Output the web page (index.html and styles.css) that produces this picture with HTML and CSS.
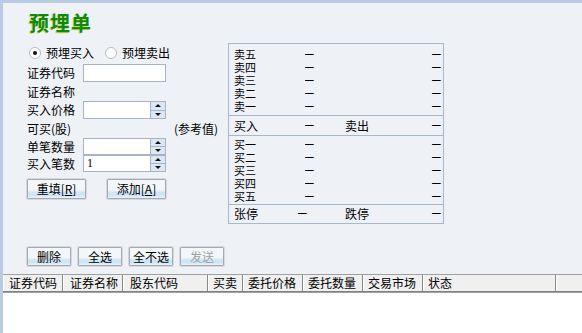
FILE: index.html
```html
<!DOCTYPE html>
<html>
<head>
<meta charset="utf-8">
<link rel="stylesheet" href="styles.css">
</head>
<body>
<div class="app">
  <div class="title">预埋单</div>
  <div class="main">
    <div class="form">
      <div class="radios">
        <span class="radio checked"></span><span class="rlabel">预埋买入</span>
        <span class="radio"></span><span class="rlabel">预埋卖出</span>
      </div>
      <div class="row r18"><span class="lbl">证券代码</span><span class="input"></span></div>
      <div class="row r19"><span class="lbl">证券名称</span></div>
      <div class="row r18"><span class="lbl">买入价格</span><span class="input spin"><span class="val"></span><span class="spinner"><span class="up"></span><span class="down"></span></span></span></div>
      <div class="row r19 between"><span class="lbl">可买(股)</span><span class="ref">(参考值)</span></div>
      <div class="row r17"><span class="lbl">单笔数量</span><span class="input spin"><span class="val"></span><span class="spinner"><span class="up"></span><span class="down"></span></span></span></div>
      <div class="row r17"><span class="lbl">买入笔数</span><span class="input spin"><span class="val">1</span><span class="spinner"><span class="up"></span><span class="down"></span></span></span></div>
      <div class="btnrow">
        <span class="btn wide">重填[<u>R</u>]</span>
        <span class="btn wide">添加[<u>A</u>]</span>
      </div>
    </div>
    <div class="quote">
      <div class="qgroup">
        <div class="qrow"><span>卖五</span><span class="d">–</span><span></span><span class="d">–</span></div>
        <div class="qrow"><span>卖四</span><span class="d">–</span><span></span><span class="d">–</span></div>
        <div class="qrow"><span>卖三</span><span class="d">–</span><span></span><span class="d">–</span></div>
        <div class="qrow"><span>卖二</span><span class="d">–</span><span></span><span class="d">–</span></div>
        <div class="qrow"><span>卖一</span><span class="d">–</span><span></span><span class="d">–</span></div>
      </div>
      <div class="qmid"><span>买入</span><span class="d">–</span><span>卖出</span><span class="d">–</span></div>
      <div class="qgroup buy">
        <div class="qrow"><span>买一</span><span class="d">–</span><span></span><span class="d">–</span></div>
        <div class="qrow"><span>买二</span><span class="d">–</span><span></span><span class="d">–</span></div>
        <div class="qrow"><span>买三</span><span class="d">–</span><span></span><span class="d">–</span></div>
        <div class="qrow"><span>买四</span><span class="d">–</span><span></span><span class="d">–</span></div>
        <div class="qrow"><span>买五</span><span class="d">–</span><span></span><span class="d">–</span></div>
      </div>
      <div class="qmid limit"><span>张停</span><span class="d">–</span><span>跌停</span><span class="d">–</span></div>
    </div>
  </div>
  <div class="actions">
    <span class="btn">删除</span>
    <span class="btn">全选</span>
    <span class="btn">全不选</span>
    <span class="btn disabled">发送</span>
  </div>
  <div class="grid">
    <div class="head">
      <span class="c c1">证券代码</span>
      <span class="c c2">证券名称</span>
      <span class="c c3">股东代码</span>
      <span class="c c4">买卖</span>
      <span class="c c5">委托价格</span>
      <span class="c c6">委托数量</span>
      <span class="c c7">交易市场</span>
      <span class="c c8">状态</span>
      <span class="c c9"></span>
    </div>
    <div class="body"></div>
  </div>
</div>
</body>
</html>
```

FILE: styles.css
```css
html, body {
  margin: 0;
  padding: 0;
}
body {
  font-family: "Noto Sans CJK SC", "Noto Sans", sans-serif;
  font-size: 12px;
  color: #000;
}
.app {
  width: 579px;
  height: 330px;
  background: #eef2f7;
  border-top: 3px solid #b8cbe2;
  border-left: 3px solid #b8cbe2;
  display: flex;
  flex-direction: column;
  overflow: hidden;
}
.title {
  margin: 6px 0 0 26px;
  height: 28px;
  line-height: 28px;
  font-size: 20px;
  font-weight: bold;
  color: #0b8a0b;
  text-shadow: -1px 1px 0 rgba(190, 190, 0, 0.55);
  letter-spacing: 1px;
}
.main {
  display: flex;
  padding-left: 24px;
  margin-top: 6px;
}
.form {
  width: 192px;
  display: flex;
  flex-direction: column;
}
.radios {
  height: 16px;
  display: flex;
  align-items: center;
  margin-top: 2px;
  margin-bottom: 3px;
}
.radio {
  width: 10px;
  height: 10px;
  border: 1px solid #b7bcc4;
  border-radius: 50%;
  background: #fff;
  margin-left: 2px;
  margin-right: 5px;
  position: relative;
}
.radio.checked::after {
  content: "";
  position: absolute;
  left: 3px;
  top: 3px;
  width: 4px;
  height: 4px;
  background: #111;
  border-radius: 50%;
}
.rlabel {
  margin-right: 9px;
  line-height: 16px;
}
.row {
  display: flex;
  align-items: center;
}
.r17 { height: 17px; }
.r18 { height: 18px; }
.r19 { height: 19px; }
.between { justify-content: space-between; }
.lbl {
  width: 56px;
  flex: none;
  line-height: 16px;
}
.ref {
  margin-right: 1px;
}
.input {
  width: 81px;
  height: 16px;
  border: 1px solid #a8b3c4;
  background: #fff;
  display: flex;
  box-sizing: content-box;
}
.r17 .input { height: 15px; }
.val {
  flex: 1;
  padding-left: 3px;
  line-height: 15px;
  font-family: "Liberation Serif", serif;
  font-size: 12px;
}
.spinner {
  width: 14px;
  display: flex;
  flex-direction: column;
  border-left: 1px solid #a8b3c4;
}
.spinner span {
  flex: 1;
  background: #dce7f4;
  position: relative;
}
.spinner .up { border-bottom: 1px solid #a8b3c4; }
.spinner .up::after, .spinner .down::after {
  content: "";
  position: absolute;
  left: 4px;
  top: 2px;
  border-left: 3px solid transparent;
  border-right: 3px solid transparent;
}
.spinner .up::after { border-bottom: 3px solid #111; }
.spinner .down::after { border-top: 3px solid #111; }
.btnrow {
  display: flex;
  gap: 21px;
  margin-top: 7px;
  margin-left: 0;
}
.btn {
  width: 42px;
  height: 17px;
  border: 1px solid #a6aab0;
  outline: 1px solid #d6d9dd;
  border-radius: 1px;
  background: linear-gradient(#f4f7fa 0%, #f4f7fa 55%, #cfe5f3 70%, #cfe5f3 85%, #eaf3fa 100%);
  text-align: center;
  line-height: 17px;
  display: inline-block;
}
.btn.wide {
  width: 57px;
  height: 18px;
  line-height: 18px;
}
.btn u { text-decoration: underline; }
.btn.disabled { color: #a0a0a0; }
.quote {
  margin-left: 9px;
  width: 214px;
  height: 179px;
  border: 1px solid #a8b8cc;
  display: flex;
  flex-direction: column;
}
.qgroup {
  padding: 4px 2px 2px 5px;
}
.qgroup.buy {
  padding-top: 2px;
  padding-bottom: 1px;
}
.qrow, .qmid {
  display: grid;
  grid-template-columns: 71px 40px 1fr auto;
  height: 13px;
  line-height: 13px;
}
.qrow {
  font-size: 11px;
}
.d {
  font-family: "Liberation Sans", sans-serif;
  font-size: 12px;
  transform: scaleX(1.3);
  transform-origin: left center;
}
.qrow span:last-child.d, .qmid span:last-child.d {
  transform-origin: right center;
}
.qmid {
  height: 19px;
  line-height: 19px;
  border-top: 1px solid #a8b8cc;
  border-bottom: 1px solid #a8b8cc;
  padding: 0 2px 0 5px;
}
.qmid.limit {
  grid-template-columns: 64px 47px 1fr auto;
  border-bottom: none;
  height: 17px;
  line-height: 17px;
}
.actions {
  display: flex;
  gap: 7px;
  padding-left: 24px;
  margin-top: 23px;
}
.grid {
  margin-top: 8px;
  flex: 1;
  display: flex;
  flex-direction: column;
}
.head {
  display: flex;
  height: 16px;
  border-top: 1px solid #a0a0a0;
  border-bottom: 1px solid #808080;
  box-shadow: 0 1px 0 #a0a0a0;
  background: #f0f0f0;
}
.c {
  flex: none;
  box-sizing: border-box;
  line-height: 16px;
  padding-left: 6px;
  border-left: 1px solid #fff;
  border-right: 1px solid #888;
  white-space: nowrap;
}
.c1 { width: 60px; padding-left: 5px; }
.c2 { width: 60px; }
.c3 { width: 85px; }
.c4 { width: 35px; padding-left: 4px; }
.c5 { width: 60px; padding-left: 4px; }
.c6 { width: 60px; padding-left: 4px; }
.c7 { width: 60px; padding-left: 4px; }
.c8 { width: 133px; padding-left: 4px; }
.c9 { flex: 1; border-right: none; }
.body {
  flex: 1;
  background: #fff;
  margin-top: 1px;
}
```
